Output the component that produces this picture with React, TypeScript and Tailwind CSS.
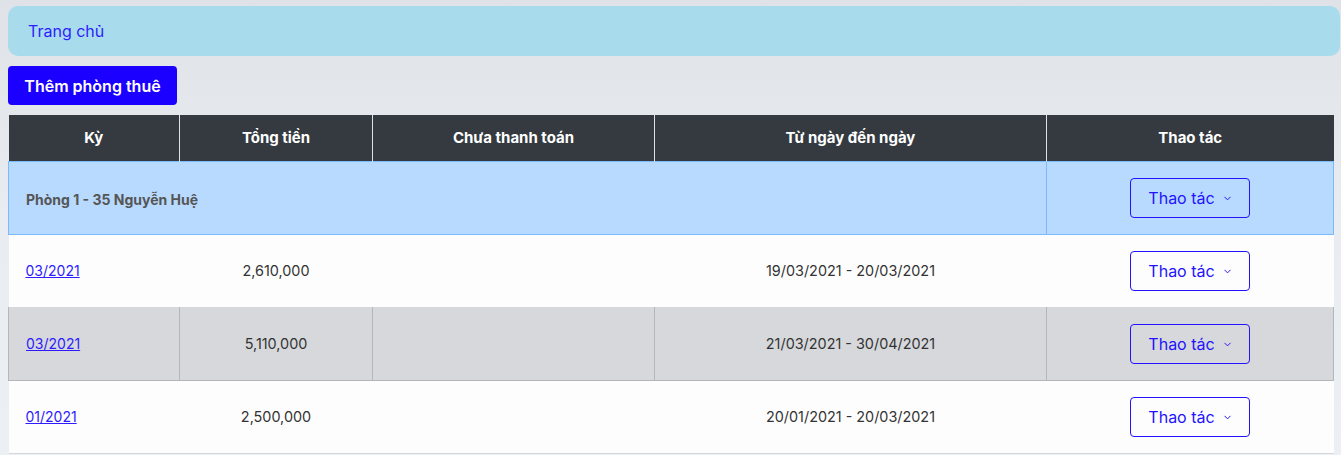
import React from "react";

const rows = [
  { ky: "03/2021", tong: "2,610,000", chua: "", tu: "19/03/2021 - 20/03/2021", alt: false },
  { ky: "03/2021", tong: "5,110,000", chua: "", tu: "21/03/2021 - 30/04/2021", alt: true },
  { ky: "01/2021", tong: "2,500,000", chua: "", tu: "20/01/2021 - 20/03/2021", alt: false },
];

const ActionButton = () => (
  <button className="inline-flex items-center gap-2 h-10 w-[120px] justify-center rounded-[4px] border border-[#2312ff] text-[16px] text-[#2312ff]">
    Thao tác
    <svg width="9" height="9" viewBox="0 0 10 10" fill="none" className="mt-[2px]">
      <path d="M2 3.5 L5 6.5 L8 3.5" stroke="#2312ff" strokeWidth="1.1" strokeLinecap="round" strokeLinejoin="round" />
    </svg>
  </button>
);

const App = () => {
  return (
    <div
      className="min-h-screen w-full bg-gradient-to-b from-[#dfe2e7] via-[#e9ecf1] to-[#eceff4] pt-[6px] pl-2 pr-[1px]"
      style={{ fontFamily: "Inter, 'Noto Sans', sans-serif" }}
    >
      <nav className="h-[50px] rounded-[10px] bg-[#a8dcec] flex items-center pl-5">
        <a className="text-[16px] text-[#2d1cff]">Trang chủ</a>
      </nav>
      <div className="mt-[10px]">
        <button className="h-[39px] w-[169px] rounded-[4px] bg-[#1c00ff] text-white text-[16px] font-semibold">
          Thêm phòng thuê
        </button>
      </div>
      <table className="mt-[10px] w-[1325px] table-fixed border-collapse text-[14.4px] text-[#333]">
        <colgroup>
          <col className="w-[171px]" />
          <col className="w-[193px]" />
          <col className="w-[282px]" />
          <col className="w-[392px]" />
          <col className="w-[287px]" />
        </colgroup>
        <thead>
          <tr className="h-[46px] bg-[#343a40] text-white text-[15px] font-bold">
            <th className="border-r border-[#dee2e6]">Kỳ</th>
            <th className="border-r border-[#dee2e6]">Tổng tiền</th>
            <th className="border-r border-[#dee2e6]">Chưa thanh toán</th>
            <th className="border-r border-[#dee2e6]">Từ ngày đến ngày</th>
            <th>Thao tác</th>
          </tr>
        </thead>
        <tbody>
          <tr className="h-[73px] bg-[#b8daff]">
            <td colSpan={4} className="border border-[#7abaff] pl-[17px] pt-[3px] text-[14px] font-bold text-[#555]">
              Phòng 1 - 35 Nguyễn Huệ
            </td>
            <td className="border border-[#7abaff] text-center">
              <ActionButton />
            </td>
          </tr>
          {rows.map((r, i) => (
            <tr
              key={i}
              className={
                r.alt
                  ? "h-[73px] bg-[#d6d8db] border-y border-[#b3b7bb]"
                  : "h-[73px] bg-[#fdfdfd] border-b border-[#d6d8db]"
              }
            >
              <td className={r.alt ? "pl-[17px] border-x border-[#b3b7bb]" : "pl-[17px]"}>
                <a className="text-[14px] text-[#2d1cff] underline">{r.ky}</a>
              </td>
              <td className={r.alt ? "text-center border-x border-[#b3b7bb]" : "text-center"}>{r.tong}</td>
              <td className={r.alt ? "text-center border-x border-[#b3b7bb]" : "text-center"}>{r.chua}</td>
              <td className={r.alt ? "text-center border-x border-[#b3b7bb]" : "text-center"}>{r.tu}</td>
              <td className={r.alt ? "text-center border-x border-[#b3b7bb]" : "text-center"}>
                <ActionButton />
              </td>
            </tr>
          ))}
        </tbody>
      </table>
    </div>
  );
};

export default App;
